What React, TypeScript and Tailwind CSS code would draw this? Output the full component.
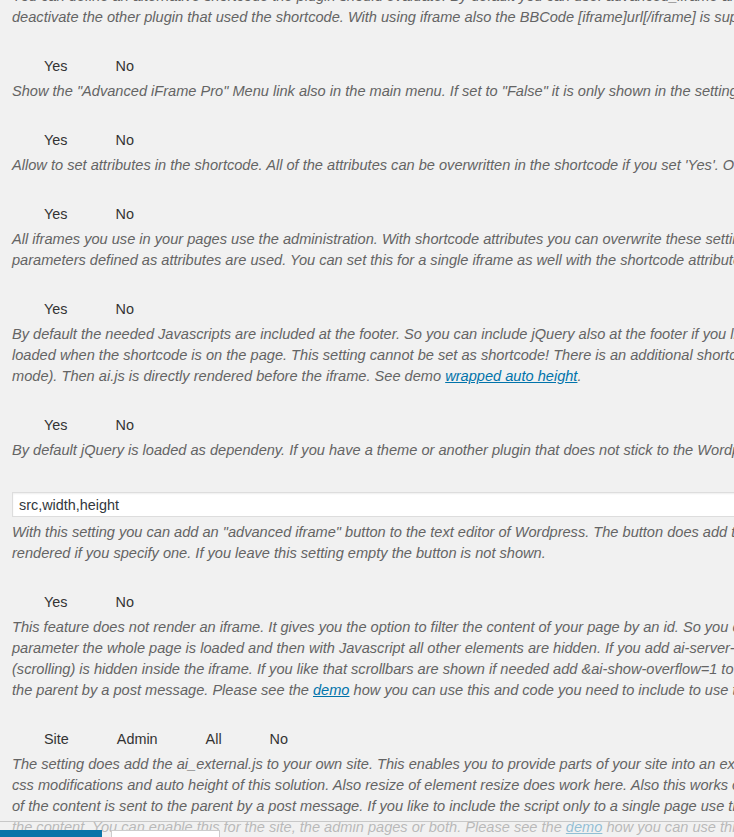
import React from "react";

type Part = string | { link: string };

interface Setting {
  options?: string[];
  input?: string;
  lines: Part[][];
}

const settings: Setting[] = [
  {
    options: ["Yes", "No"],
    lines: [
      ['Show the "Advanced iFrame Pro" Menu link also in the main menu. If set to "False" it is only shown in the settings menu.'],
    ],
  },
  {
    options: ["Yes", "No"],
    lines: [
      ["Allow to set attributes in the shortcode. All of the attributes can be overwritten in the shortcode if you set 'Yes'. Otherwise"],
    ],
  },
  {
    options: ["Yes", "No"],
    lines: [
      ["All iframes you use in your pages use the administration. With shortcode attributes you can overwrite these settings."],
      ["parameters defined as attributes are used. You can set this for a single iframe as well with the shortcode attribute"],
    ],
  },
  {
    options: ["Yes", "No"],
    lines: [
      ["By default the needed Javascripts are included at the footer. So you can include jQuery also at the footer if you like."],
      ["loaded when the shortcode is on the page. This setting cannot be set as shortcode! There is an additional shortcode"],
      ["mode). Then ai.js is directly rendered before the iframe. See demo ", { link: "wrapped auto height" }, "."],
    ],
  },
  {
    options: ["Yes", "No"],
    lines: [
      ["By default jQuery is loaded as dependeny. If you have a theme or another plugin that does not stick to the Wordpress"],
    ],
  },
  {
    input: "src,width,height",
    lines: [
      ['With this setting you can add an "advanced iframe" button to the text editor of Wordpress. The button does add the'],
      ["rendered if you specify one. If you leave this setting empty the button is not shown."],
    ],
  },
  {
    options: ["Yes", "No"],
    lines: [
      ["This feature does not render an iframe. It gives you the option to filter the content of your page by an id. So you can"],
      ["parameter the whole page is loaded and then with Javascript all other elements are hidden. If you add ai-server-side"],
      ["(scrolling) is hidden inside the iframe. If you like that scrollbars are shown if needed add &ai-show-overflow=1 to the"],
      ["the parent by a post message. Please see the ", { link: "demo" }, " how you can use this and code you need to include to use this."],
    ],
  },
  {
    options: ["Site", "Admin", "All", "No"],
    lines: [
      ["The setting does add the ai_external.js to your own site. This enables you to provide parts of your site into an external"],
      ["css modifications and auto height of this solution. Also resize of element resize does work here. Also this works on"],
      ["of the content is sent to the parent by a post message. If you like to include the script only to a single page use the"],
      ["the content. You can enable this for the site, the admin pages or both. Please see the ", { link: "demo" }, " how you can use this."],
    ],
  },
];

function Line({ parts }: { parts: Part[] }) {
  return (
    <p className="h-[21px] leading-[21px] whitespace-nowrap">
      {parts.map((p, i) =>
        typeof p === "string" ? (
          <span key={i}>{p}</span>
        ) : (
          <a key={i} href="#" className="text-[#0073aa] underline">
            {p.link}
          </a>
        )
      )}
    </p>
  );
}

function Description({ lines }: { lines: Part[][] }) {
  return (
    <div className="italic text-[14.6px] text-[#646464]">
      {lines.map((l, i) => (
        <Line key={i} parts={l} />
      ))}
    </div>
  );
}

export default function App() {
  return (
    <div
      className="relative w-[734px] h-[837px] overflow-hidden bg-[#f1f1f1] text-[14px] text-[#333]"
      style={{ fontFamily: '"Liberation Sans", Arial, sans-serif' }}
    >
      <div className="pl-[12px] -mt-[14px]">
        {/* bloco cortado no topo */}
        <Description
          lines={[
            ["You can define an alternative shortcode the plugin should evaluate. By default you can use: advanced_iframe and"],
            ["deactivate the other plugin that used the shortcode. With using iframe also the BBCode [iframe]url[/iframe] is supported."],
          ]}
        />

        {settings.map((s, i) => (
          <div key={i} className={s.input ? "mt-[31px]" : "mt-[28px]"}>
            {s.options && (
              <div className="flex h-[21px] leading-[21px] mb-[4px] pl-[32px] gap-[48px] text-[14.4px]">
                {s.options.map((o) => (
                  <label key={o}>{o}</label>
                ))}
              </div>
            )}
            {s.input && (
              <input
                readOnly
                value={s.input}
                className="block w-[760px] h-[25px] mb-[5px] bg-white border border-[#ddd] px-[6px] text-[14.4px] text-[#32373c] shadow-[inset_0_1px_2px_rgba(0,0,0,0.07)] outline-none"
              />
            )}
            <Description lines={s.lines} />
          </div>
        ))}
      </div>

      {/* rodapé fixo com botões */}
      <div className="absolute left-0 right-0 bottom-0 h-[16px] border-t border-[#c8c8c8] bg-[#f1f1f1]/60">
        <div className="flex gap-[9px] pt-[8px]">
          <div className="w-[102px] h-[20px] bg-[#0a74a8]" />
          <div className="w-[109px] h-[20px] bg-white border border-[#ccc]" />
        </div>
      </div>
    </div>
  );
}
